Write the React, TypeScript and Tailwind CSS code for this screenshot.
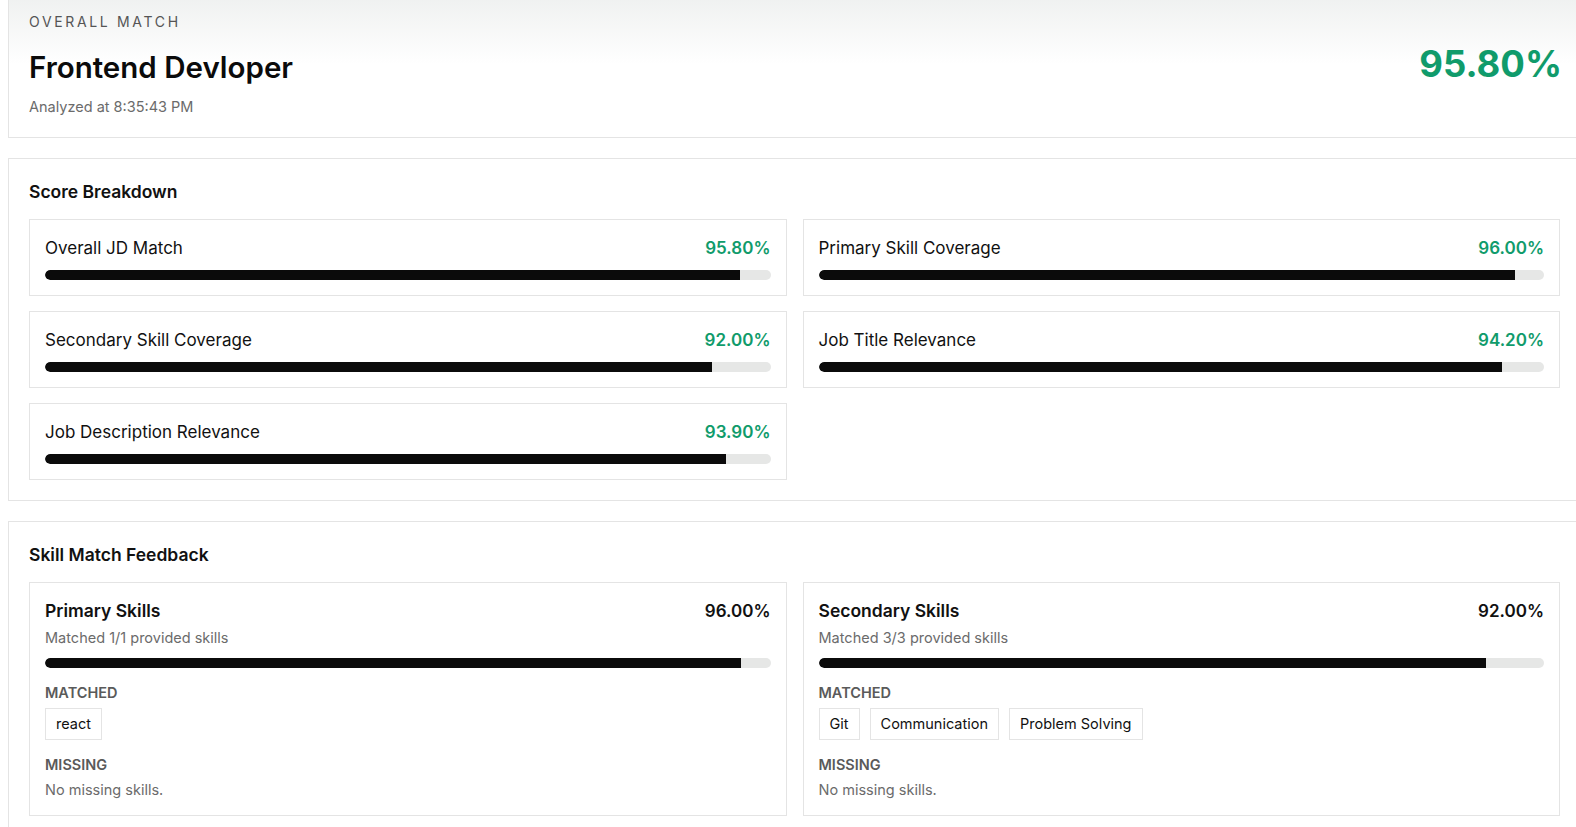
import React from 'react';

type Metric = { label: string; value: number };

const breakdown: Metric[] = [
  { label: 'Overall JD Match', value: 95.8 },
  { label: 'Primary Skill Coverage', value: 96 },
  { label: 'Secondary Skill Coverage', value: 92 },
  { label: 'Job Title Relevance', value: 94.2 },
  { label: 'Job Description Relevance', value: 93.9 },
];

type SkillGroup = {
  title: string;
  value: number;
  matched: string[];
  provided: number;
  missing: string[];
};

const skills: SkillGroup[] = [
  { title: 'Primary Skills', value: 96, matched: ['react'], provided: 1, missing: [] },
  { title: 'Secondary Skills', value: 92, matched: ['Git', 'Communication', 'Problem Solving'], provided: 3, missing: [] },
];

function Bar({ value }: { value: number }) {
  return (
    <div className="h-[10px] w-full rounded-full bg-[#e6e7e6] overflow-hidden">
      <div className="h-full rounded-l-full bg-[#0b0b0b]" style={{ width: `${value}%` }} />
    </div>
  );
}

function MetricCard({ m }: { m: Metric }) {
  return (
    <div className="border border-[#e4e4e4] bg-white px-[15px] pt-[15px] pb-[15px]">
      <div className="flex items-center justify-between leading-[26px] mb-[9px]">
        <span className="text-[17px] text-[#111]">{m.label}</span>
        <span className="text-[17px] font-semibold text-[#109b6b]">{m.value.toFixed(2)}%</span>
      </div>
      <Bar value={m.value} />
    </div>
  );
}

function SkillCard({ s }: { s: SkillGroup }) {
  return (
    <div className="border border-[#e4e4e4] bg-white px-[15px] pt-4 pb-[15px]">
      <div className="flex items-center justify-between leading-6">
        <span className="text-[17.5px] font-semibold text-[#111]">{s.title}</span>
        <span className="text-[17px] font-semibold text-[#111]">{s.value.toFixed(2)}%</span>
      </div>
      <p className="mt-[5px] text-[14.5px] leading-5 text-[#6b6b6b]">
        Matched {s.matched.length}/{s.provided} provided skills
      </p>
      <div className="mt-[10px]">
        <Bar value={s.value} />
      </div>
      <div className="mt-[15px] text-[14.5px] leading-5 font-semibold uppercase text-[#5a5a5a]">Matched</div>
      <div className="mt-[5px] flex flex-wrap gap-[10px]">
        {s.matched.map((k) => (
          <span key={k} className="h-8 flex items-center border border-[#e4e4e4] px-[10px] text-[14.5px] text-[#111]">
            {k}
          </span>
        ))}
      </div>
      <div className="mt-[15px] text-[14.5px] leading-5 font-semibold uppercase text-[#5a5a5a]">Missing</div>
      <p className="mt-[5px] text-[14.5px] leading-5 text-[#6b6b6b]">
        {s.missing.length ? s.missing.join(', ') : 'No missing skills.'}
      </p>
    </div>
  );
}

export default function App() {
  return (
    <div
      className="min-h-screen w-full overflow-hidden bg-white text-[#111]"
      style={{ fontFamily: 'Inter, "Noto Sans", sans-serif' }}
    >
      <div className="ml-2 w-[1573px] -mt-[9px] flex flex-col gap-5">
        {/* Overall match header */}
        <section className="border border-[#e4e4e4] bg-gradient-to-b from-[#eef0ef] via-white to-white px-5 pt-5 pb-5">
          <div className="flex items-start justify-between">
            <div>
              <div className="text-[14px] leading-5 tracking-[0.19em] uppercase text-[#555]">Overall Match</div>
              <h1 className="mt-[17px] text-[29.5px] leading-9 font-semibold text-[#0b0b0b]">Frontend Devloper</h1>
              <p className="mt-[12px] text-[14.5px] leading-5 text-[#6b6b6b]">Analyzed at 8:35:43 PM</p>
            </div>
            <div className="mt-[32px] -mr-[2px] text-[36.5px] leading-10 font-bold text-[#109b6b]">95.80%</div>
          </div>
        </section>

        {/* Score breakdown */}
        <section className="border border-[#e4e4e4] bg-white px-5 pt-[21px] pb-5">
          <h2 className="text-[17.5px] leading-6 font-semibold mb-[15px]">Score Breakdown</h2>
          <div className="grid grid-cols-2 gap-x-4 gap-y-[15px]">
            {breakdown.map((m) => (
              <MetricCard key={m.label} m={m} />
            ))}
          </div>
        </section>

        {/* Skill match feedback */}
        <section className="border border-[#e4e4e4] bg-white px-5 pt-[21px] pb-5">
          <h2 className="text-[17.5px] leading-6 font-semibold mb-[15px]">Skill Match Feedback</h2>
          <div className="grid grid-cols-2 gap-4">
            {skills.map((s) => (
              <SkillCard key={s.title} s={s} />
            ))}
          </div>
        </section>
      </div>
    </div>
  );
}
